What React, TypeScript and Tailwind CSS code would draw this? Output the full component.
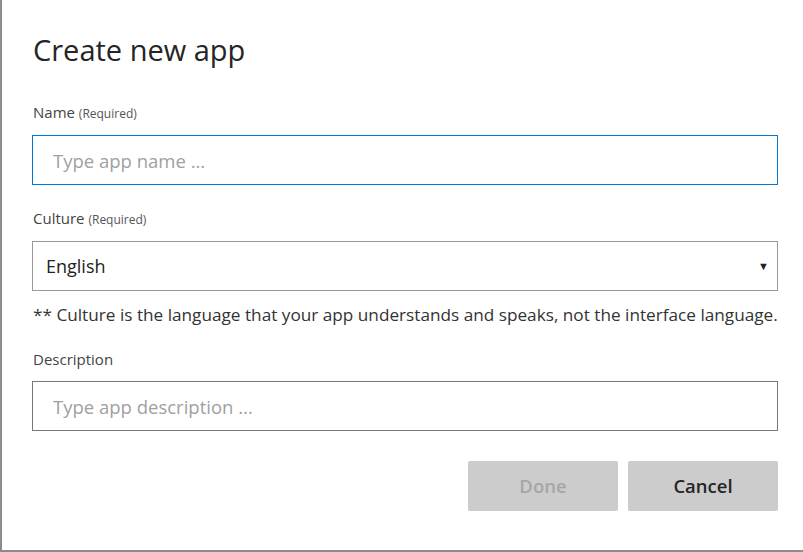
export default function App() {
  const font = { fontFamily: '"Open Sans", "Noto Sans", sans-serif' };
  return (
    <div
      style={font}
      className="w-[803px] h-[552px] bg-white border-l-2 border-b-2 border-[#8c8c8c] pl-[30px] pr-[25px] pt-[30px] box-border text-[#333]"
    >
      <h1 className="text-[29px] leading-[40px] text-[#252525] font-normal ml-[1px]">Create new app</h1>

      <label className="block mt-[32px] ml-[1px] text-[15px] leading-[20px] text-[#444]">
        Name <span className="text-[12px] text-[#555]">(Required)</span>
      </label>
      <input
        placeholder="Type app name ..."
        className="mt-[11px] w-full h-[50px] border border-[#0078d4] px-[20px] text-[18.5px] text-[#333] placeholder:text-[#a0a0a0] outline-none"
      />

      <label className="block mt-[23px] ml-[1px] text-[15px] leading-[20px] text-[#444]">
        Culture <span className="text-[12px] text-[#555]">(Required)</span>
      </label>
      <div className="mt-[11px] w-full h-[50px] border border-[#999] flex items-center justify-between pl-[13px] pr-[8px]">
        <span className="text-[18px] text-[#222]">English</span>
        <span className="text-[11px] text-[#222]">▼</span>
      </div>
      <p className="mt-[12px] ml-[1px] text-[17.2px] leading-[24px] text-[#333] whitespace-nowrap">
        ** Culture is the language that your app understands and speaks, not the interface language.
      </p>

      <label className="block mt-[22px] ml-[1px] text-[15px] leading-[20px] text-[#444]">Description</label>
      <input
        placeholder="Type app description ..."
        className="mt-[12px] w-full h-[50px] border border-[#777] px-[20px] text-[18.5px] text-[#333] placeholder:text-[#a0a0a0] outline-none"
      />

      <div className="mt-[30px] flex justify-end gap-[10px]">
        <button className="w-[150px] h-[50px] rounded-[2px] bg-[#cccccc] text-[18.5px] font-semibold text-[#a6a6a6]">
          Done
        </button>
        <button className="w-[150px] h-[50px] rounded-[2px] bg-[#cccccc] text-[18.5px] font-semibold text-[#252525]">
          Cancel
        </button>
      </div>
    </div>
  );
}
